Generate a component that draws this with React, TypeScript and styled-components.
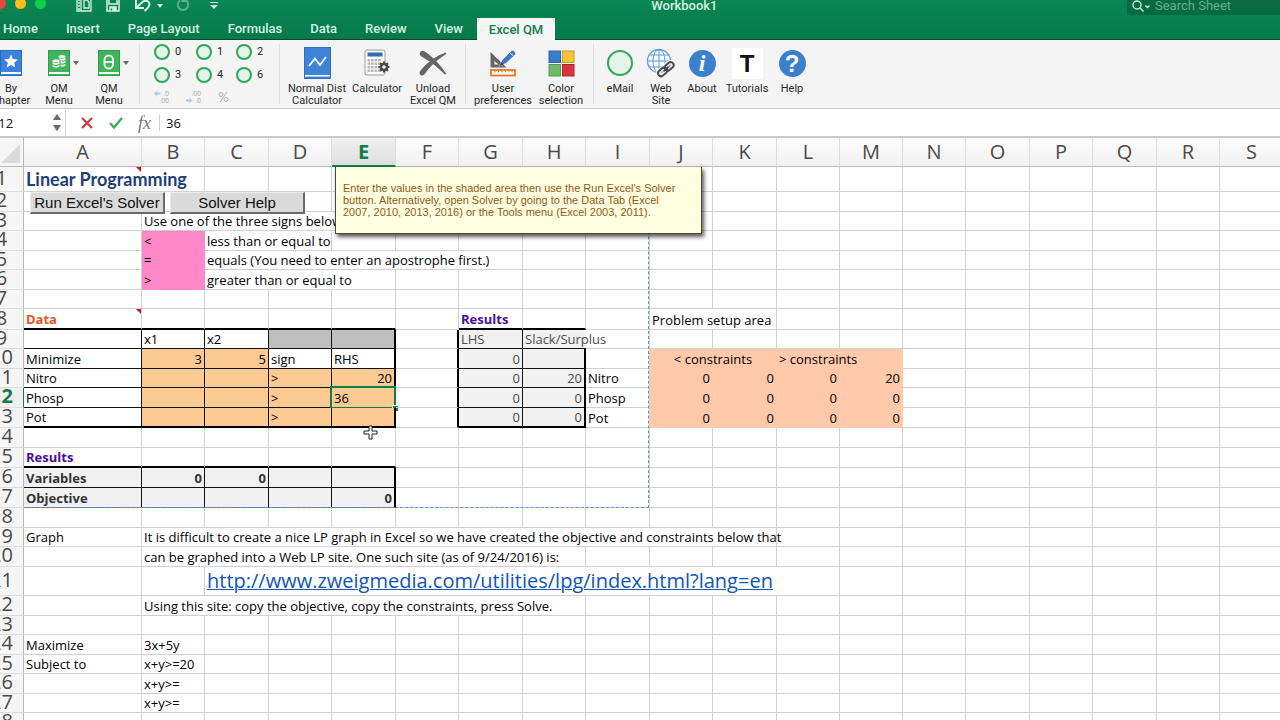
import React from 'react';
import styled, { createGlobalStyle, css } from 'styled-components';

const GlobalStyle = createGlobalStyle`
  *, *::before, *::after { box-sizing: border-box; }
  body { margin: 0; overflow: hidden; background: #fff; }
  button, input { font: inherit; color: inherit; }
`;

const uiFont = `Roboto, Inter, "Liberation Sans", sans-serif`;
const cellFont = `"Open Sans", "Noto Sans", sans-serif`;
const titleFont = `Lato, "Open Sans", sans-serif`;
const grid = '#d0d0d0';
const green = '#107c49';

/* The workbook window hangs slightly over the top left edge of the screen. */
const Viewport = styled.div`
  height: 100vh;
  overflow: hidden;
`;

const WorkbookWindow = styled.div`
  margin: -10px 0 0 -20px;
  display: flex;
  flex-direction: column;
  height: calc(100vh + 10px);
  font-family: ${uiFont};
`;

const Header = styled.header`
  flex: none;
  background: linear-gradient(#0b8a55, #04794a);
  border-bottom: 1px solid #0a4a2c;
  color: #d6f2e3;
`;

const TitleRow = styled.div`
  display: flex;
  align-items: center;
  height: 28px;
  padding-top: 4px;
`;

const TitleLeft = styled.div`
  flex: 7 1 0;
  display: flex;
  align-items: center;
  padding: 0 0 4px 15px;
`;

const Lights = styled.div`
  display: flex;
  gap: 9px;
  margin: 0 30px 2px 0;
`;

const Light = styled.button<{ $color: string }>`
  width: 11px;
  height: 11px;
  padding: 0;
  border: 0;
  border-radius: 50%;
  background: ${(p) => p.$color};
`;

const QuickButton = styled.button<{ $width: number; $dim?: boolean }>`
  display: flex;
  justify-content: center;
  width: ${(p) => p.$width}px;
  padding: 0;
  border: 0;
  background: none;
  opacity: ${(p) => (p.$dim ? 0.4 : 1)};
`;

const Title = styled.h1`
  margin: 0;
  font-size: 13px;
  line-height: 16px;
  font-weight: 500;
`;

const TitleRight = styled.div`
  flex: 6 1 0;
  display: flex;
  justify-content: flex-end;
`;

const SearchBox = styled.label`
  display: flex;
  align-items: center;
  width: 153px;
  height: 18px;
  gap: 3px;
  padding-left: 5px;
  background: #076a41;
`;

const SearchInput = styled.input`
  width: 110px;
  padding: 0;
  border: 0;
  outline: 0;
  background: none;
  font-size: 13px;
  line-height: 16px;
  &::placeholder { color: #66ad8a; opacity: 1; }
`;

const Tabs = styled.nav`
  display: flex;
  height: 21px;
  padding-left: 9px;
`;

const Tab = styled.button<{ $active?: boolean }>`
  padding: 0 14px;
  border: 0;
  background: none;
  font-size: 13px;
  font-weight: 500;
  line-height: 21px;
  ${(p) =>
    p.$active &&
    css`
      padding: 0 12px;
      height: 22px;
      background: #f6f6f6;
      color: #12804c;
    `}
`;

const Ribbon = styled.div`
  flex: none;
  display: flex;
  height: 69px;
  padding-left: 8px;
  background: #f4f4f4;
  border-bottom: 1px solid #c8c8c8;
`;

const Separator = styled.div`
  width: 1px;
  height: 60px;
  margin: 4px 6px 0 5px;
  background: #dedede;
`;

const Tool = styled.button<{ $width: number }>`
  display: flex;
  flex-direction: column;
  align-items: center;
  width: ${(p) => p.$width}px;
  padding: 6px 0 0;
  border: 0;
  background: none;
  color: #262626;
  font-size: 11px;
  line-height: 12px;
  white-space: nowrap;
`;

const IconRow = styled.span`
  display: grid;
  grid-template-columns: 1fr auto 1fr;
  align-items: center;
  width: 100%;
  height: 34px;
  margin-bottom: 3px;
`;

const IconSlot = styled.span`
  grid-column: 2;
  display: flex;
`;

const Arrow = styled.span`
  justify-self: end;
  margin-right: 5px;
  border: 3px solid transparent;
  border-top: 4px solid #666;
  border-bottom: 0;
`;

const Custom = styled.div`
  display: flex;
  flex-direction: column;
  width: 128px;
  padding: 0 0 0 8px;
`;

const CustomGrid = styled.div`
  display: grid;
  grid-template-columns: 42px 40px 42px;
  grid-auto-rows: 23px;
`;

const RingButton = styled.button`
  display: flex;
  align-items: center;
  gap: 5px;
  padding: 0;
  border: 0;
  background: none;
  font-size: 11px;
  color: #262626;
`;

const Ring = styled.span<{ $size: number }>`
  width: ${(p) => p.$size}px;
  height: ${(p) => p.$size}px;
  border: 2px solid #2fa659;
  border-radius: 50%;
  background: #e2f4e6;
`;

const FormatRow = styled.div`
  display: flex;
  gap: 17px;
  padding-top: 4px;
`;

const FormatButton = styled.button`
  display: flex;
  padding: 0;
  border: 0;
  background: none;
`;

const FormulaBar = styled.div`
  flex: none;
  display: flex;
  align-items: center;
  height: 29px;
  background: #fff;
  border-bottom: 2px solid #c9c9c9;
  font-family: ${cellFont};
  color: #111;
`;

const NameBox = styled.input`
  width: 60px;
  padding: 0 0 0 11px;
  border: 0;
  outline: 0;
  background: none;
  font-size: 13px;
`;

const Stepper = styled.div`
  display: flex;
  flex-direction: column;
  gap: 5px;
  margin: 0 4px 0 13px;
`;

const Step = styled.button<{ $up?: boolean }>`
  width: 0;
  height: 0;
  padding: 0;
  border: 0 solid transparent;
  border-width: ${(p) => (p.$up ? '0 4px 6px' : '6px 4px 0')};
  border-${(p) => (p.$up ? 'bottom' : 'top')}-color: #6b6b6b;
`;

const BarLine = styled.div<{ $height: number }>`
  width: 1px;
  height: ${(p) => p.$height}px;
  margin-right: 6px;
  background: #cfcfcf;
`;

const BarButton = styled.button`
  display: flex;
  align-items: center;
  justify-content: center;
  width: 29px;
  padding: 0;
  border: 0;
  background: none;
`;

const Fx = styled.span`
  font: italic 18px/20px "Liberation Serif", serif;
  color: #777;
`;

const FormulaInput = styled.input`
  flex: 1;
  padding: 0;
  border: 0;
  outline: 0;
  background: none;
  font-size: 13px;
`;

const Sheet = styled.main`
  flex: 1;
  position: relative;
  min-height: 0;
  overflow: hidden;
  background: #fff;
`;

const Table = styled.table`
  table-layout: fixed;
  width: 0;
  border-collapse: separate;
  border-spacing: 0;
  font-family: ${cellFont};
  font-size: 13px;
  line-height: 17px;
  color: #000;
`;

const Row = styled.tr<{ $height: number }>`
  height: ${(p) => p.$height}px;
`;

const Corner = styled.th`
  padding: 0;
  background: #f6f6f6;
  border-right: 1px solid #b8b8b8;
  border-bottom: 1px solid #b8b8b8;
  vertical-align: bottom;
  text-align: right;
  line-height: 0;
`;

const ColumnHead = styled.th<{ $active: boolean }>`
  padding: 0;
  background: linear-gradient(#fdfdfd, #f1f1f1);
  border-right: 1px solid #dcdcdc;
  border-bottom: 1px solid #b8b8b8;
  font-size: 20px;
  line-height: 24px;
  font-weight: 400;
  color: #4a4a4a;
  ${(p) =>
    p.$active &&
    css`
      background: linear-gradient(#f0f0f0, #dedede);
      border-bottom: 2px solid ${green};
      font-weight: 700;
      color: ${green};
    `}
`;

const RowHead = styled.th<{ $active: boolean }>`
  padding: 0 0 3px;
  background: ${(p) => (p.$active ? '#efefef' : '#f6f6f6')};
  border-right: 1px solid ${(p) => (p.$active ? green : '#b8b8b8')};
  border-bottom: 1px solid #dcdcdc;
  font-size: 20px;
  line-height: 14px;
  font-weight: ${(p) => (p.$active ? 700 : 400)};
  color: ${(p) => (p.$active ? green : '#4a4a4a')};
`;

const Cell = styled.td<{
  $right: string;
  $bottom: string;
  $line: number;
  $fill?: string;
  $align?: string;
  $bold?: boolean;
  $color?: string;
  $size?: number;
  $font?: string;
  $selected?: boolean;
}>`
  position: relative;
  padding: 0 2px;
  white-space: nowrap;
  vertical-align: bottom;
  border-right: ${(p) => p.$right};
  border-bottom: ${(p) => p.$bottom};
  background: ${(p) => p.$fill ?? 'transparent'};
  text-align: ${(p) => p.$align ?? 'left'};
  font-weight: ${(p) => (p.$bold ? 700 : 400)};
  color: ${(p) => p.$color ?? 'inherit'};
  font-family: ${(p) => p.$font ?? 'inherit'};
  ${(p) =>
    p.$size &&
    css`
      font-size: ${p.$size}px;
      line-height: ${p.$line}px;
    `}
  ${(p) =>
    p.$selected &&
    css`
      &::before {
        content: '';
        position: absolute;
        inset: -2px;
        border: 2px solid ${green};
      }
      &::after {
        content: '';
        position: absolute;
        right: -4px;
        bottom: -4px;
        width: 6px;
        height: 6px;
        background: ${green};
        border: solid #fff;
        border-width: 1px 0 0 1px;
      }
    `}
`;

const NoteMark = styled.span<{ $left: number }>`
  position: absolute;
  top: 0;
  left: ${(p) => p.$left}px;
  border-top: 5px solid #c8161d;
  border-left: 5px solid transparent;
`;

const SiteLink = styled.a`
  color: #1155b5;
  text-decoration: underline;
  text-decoration-thickness: 1px;
`;

const PageBreak = styled.div`
  position: absolute;
  top: 29px;
  left: 44px;
  width: 625px;
  height: 341px;
  border: dashed #5f93c9;
  border-width: 0 1px 1px 0;
  pointer-events: none;
`;

const MacroButtons = styled.div`
  position: absolute;
  top: 54px;
  left: 50px;
  display: flex;
  gap: 5px;
`;

const MacroButton = styled.button`
  width: 135px;
  height: 22px;
  padding: 0;
  border: solid;
  border-width: 1px 2px 2px 1px;
  border-color: #ececec #6a6a6a #6a6a6a #ececec;
  background: #dadada;
  font-family: "Liberation Sans", Arial, sans-serif;
  font-size: 15px;
  line-height: 18px;
  color: #111;
`;

const Comment = styled.aside`
  position: absolute;
  top: 29px;
  left: 355px;
  width: 367px;
  height: 67px;
  padding: 15px 20px 0 7px;
  background: #fdffe0;
  border: solid #4a4a3a;
  border-width: 0 1px 1px;
  box-shadow: 2px 3px 4px rgba(0, 0, 0, 0.65);
  font-family: "Liberation Sans", Arial, sans-serif;
  font-size: 11px;
  line-height: 12px;
  color: #935a17;
`;

const Pointer = styled.svg`
  position: absolute;
  top: 287px;
  left: 383px;
`;

type Spec = {
  text?: React.ReactNode;
  span?: number;
  align?: 'right' | 'center';
  bold?: boolean;
  color?: string;
  size?: number;
  font?: string;
};

const violet = '#4b0d9a';
const num = (text: string, color?: string): Spec => ({ text, align: 'right', color });
const total = (text: string): Spec => ({ text, align: 'right', bold: true, color: '#333' });
const dim = '#4c4c4c';

const cells: Record<string, Spec> = {
  A1: { text: 'Linear Programming', span: 2, bold: true, color: '#1f3f77', size: 18, font: titleFont },
  B3: { text: 'Use one of the three signs below', span: 4 },
  B4: { text: '<' },
  C4: { text: 'less than or equal to', span: 2 },
  B5: { text: '=' },
  C5: { text: 'equals (You need to enter an apostrophe first.)', span: 5 },
  B6: { text: '>' },
  C6: { text: 'greater than or equal to', span: 3 },
  A8: { text: 'Data', bold: true, color: '#e4531f' },
  G8: { text: 'Results', bold: true, color: violet },
  J8: { text: 'Problem setup area', span: 2 },
  B9: { text: 'x1' },
  C9: { text: 'x2' },
  G9: { text: 'LHS', color: dim },
  H9: { text: 'Slack/Surplus', color: dim },
  A10: { text: 'Minimize' },
  B10: num('3'),
  C10: num('5'),
  D10: { text: 'sign' },
  E10: { text: 'RHS' },
  G10: num('0', dim),
  J10: { text: '< constraints', span: 2, align: 'center' },
  L10: { text: '> constraints', span: 2 },
  A11: { text: 'Nitro' },
  D11: { text: '>' },
  E11: num('20'),
  G11: num('0', dim),
  H11: num('20', dim),
  I11: { text: 'Nitro' },
  A12: { text: 'Phosp' },
  D12: { text: '>' },
  E12: { text: '36' },
  G12: num('0', dim),
  H12: num('0', dim),
  I12: { text: 'Phosp' },
  A13: { text: 'Pot' },
  D13: { text: '>' },
  G13: num('0', dim),
  H13: num('0', dim),
  I13: { text: 'Pot' },
  A15: { text: 'Results', bold: true, color: violet },
  A16: { text: 'Variables', bold: true, color: '#333' },
  B16: total('0'),
  C16: total('0'),
  A17: { text: 'Objective', bold: true, color: '#333' },
  E17: total('0'),
  A19: { text: 'Graph' },
  B19: {
    text: 'It is difficult to create a nice LP graph in Excel so we have created the objective and constraints below that',
    span: 10,
  },
  B20: { text: 'can be graphed into a Web LP site. One such site (as of 9/24/2016) is:', span: 7 },
  C21: {
    text: (
      <SiteLink href="http://www.zweigmedia.com/utilities/lpg/index.html?lang=en">
        http://www.zweigmedia.com/utilities/lpg/index.html?lang=en
      </SiteLink>
    ),
    span: 10,
    size: 20,
  },
  B22: { text: 'Using this site: copy the objective, copy the constraints, press Solve.', span: 7 },
  A24: { text: 'Maximize' },
  B24: { text: '3x+5y' },
  A25: { text: 'Subject to' },
  B25: { text: 'x+y>=20' },
  B26: { text: 'x+y>=' },
  B27: { text: 'x+y>=' },
};
['J', 'K', 'L', 'M'].forEach((c) =>
  [11, 12, 13].forEach((r) => {
    cells[c + r] = num(c === 'M' && r === 11 ? '20' : '0');
  })
);

const columns = 'ABCDEFGHIJKLMNOPQRSTUVWXYZ'.split('');
const columnWidth = (index: number) => {
  if (index === 0) return 118;
  return index % 2 || index === 12 ? 63 : 64;
};
const rowHeights = [
  25, 20, 19, 20, 19, 20, 19, 21, 19, 20, 19, 20, 20, 20, 20, 20, 20, 20, 19, 20, 29, 20, 19, 20, 19,
  20, 19, 20, 19, 20,
];

const within = (col: string, row: number, from: string, to: string, top: number, bottom: number) =>
  col >= from && col <= to && row >= top && row <= bottom;

function fillOf(c: string, r: number) {
  if (within(c, r, 'B', 'B', 4, 6)) return '#ff88c8';
  if (within(c, r, 'D', 'E', 9, 9)) return '#bfbfbf';
  if (within(c, r, 'B', 'C', 10, 13) || within(c, r, 'D', 'E', 11, 13)) return '#fdca94';
  if (within(c, r, 'G', 'H', 9, 13) || within(c, r, 'A', 'E', 16, 17)) return '#f1f1f1';
  if (within(c, r, 'J', 'M', 10, 13)) return '#ffc9aa';
  return undefined;
}

function rightOf(c: string, r: number) {
  const thin = '1px solid #111';
  const thick = '2px solid #000';
  if (within(c, r, 'A', 'E', 9, 13) || within(c, r, 'A', 'E', 16, 17)) return c === 'E' ? thick : thin;
  if (within(c, r, 'F', 'F', 9, 13)) return thick;
  if (within(c, r, 'G', 'G', 9, 13)) return thin;
  if (c === 'H' && r === 9) return '0';
  if (within(c, r, 'H', 'H', 10, 13)) return thick;
  if (within(c, r, 'J', 'M', 10, 13) || within(c, r, 'B', 'B', 4, 6)) return `1px solid ${fillOf(c, r)}`;
  return `1px solid ${grid}`;
}

function bottomOf(c: string, r: number) {
  const thick = '2px solid #000';
  const inLeft = c <= 'E';
  const inMiddle = c === 'G' || c === 'H';
  if ((r === 8 || r === 13) && (inLeft || inMiddle)) return thick;
  if (r === 15 && inLeft) return thick;
  if ((r >= 9 && r <= 12 && (inLeft || inMiddle)) || (r === 16 && inLeft)) return '1px solid #111';
  if (r === 17 && inLeft) return '1px solid #777';
  if (within(c, r, 'J', 'M', 10, 13) || within(c, r, 'B', 'B', 4, 6)) return `1px solid ${fillOf(c, r)}`;
  return `1px solid ${grid}`;
}

function SheetRow({ row }: { row: number }) {
  const out: React.ReactNode[] = [];
  for (let i = 0; i < columns.length; ) {
    const c = columns[i];
    const spec = cells[c + row] ?? {};
    const span = spec.span ?? 1;
    out.push(
      <Cell
        key={c}
        colSpan={span}
        $right={rightOf(columns[i + span - 1], row)}
        $bottom={bottomOf(c, row)}
        $line={rowHeights[row - 1] - 1}
        $fill={fillOf(c, row)}
        $align={spec.align}
        $bold={spec.bold}
        $color={spec.color}
        $size={spec.size}
        $font={spec.font}
        $selected={c === 'E' && row === 12}
      >
        {spec.text}
        {c === 'A' && (row === 1 || row === 8) && <NoteMark $left={112} />}
      </Cell>
    );
    i += span;
  }
  return (
    <Row $height={rowHeights[row - 1]}>
      <RowHead scope="row" $active={row === 12}>{row}</RowHead>
      {out}
    </Row>
  );
}

const Book = ({ color, edge, children }: { color: string; edge: string; children: React.ReactNode }) => (
  <svg width="22" height="26" viewBox="0 0 22 26">
    <rect x="0.5" y="0.5" width="21" height="25" fill={color} stroke={edge} />
    <rect x="1" y="22" width="20" height="2" fill="#fff" />
    {children}
  </svg>
);

const ChapterIcon = () => (
  <Book color="#3b82dc" edge="#2a6cc0">
    <path d="M11 4.5l1.9 4.6 5 .4-3.8 3.2 1.2 4.8-4.3-2.6-4.3 2.6 1.2-4.8L4.100 9.500l5-.4z" fill="#fff" />
  </Book>
);

const CoinsIcon = () => (
  <Book color="#3fb45c" edge="#2f9d4c">
    <g fill="#e9f8ec">
      <ellipse cx="8" cy="10.700" rx="3.500" ry="1.500" />
      <path d="M4.500 11.800c1 1.500 6 1.500 7 0v2c-1 1.500-6 1.500-7 0zM4.500 14.800c1 1.500 6 1.500 7 0v1.700c-1 1.500-6 1.500-7 0z" />
      <ellipse cx="14" cy="6.500" rx="3.500" ry="1.500" />
      <path d="M10.500 7.500c1 1.500 6 1.500 7 0v2c-1 1.500-5 1.500-5.500 .5zM12.500 11c1.500.8 4 .5 5-.5v2c-1 1-3 1.300-5 .9zM12.500 14.500c1.500.5 4 .2 5-.8v1.500c-1 1.300-3 1.500-5 1.200z" />
    </g>
  </Book>
);

const ThetaIcon = () => (
  <Book color="#3fb45c" edge="#2f9d4c">
    <rect x="6.500" y="5.500" width="8.500" height="13" rx="4.200" fill="none" stroke="#e9f8ec" strokeWidth="2" />
    <path d="M7 12h8" stroke="#e9f8ec" strokeWidth="2" />
  </Book>
);

const ChartIcon = () => (
  <svg width="27" height="32" viewBox="0 0 27 32">
    <rect x="0.500" y="0.500" width="26" height="31" fill="#3d83d6" stroke="#2f6fbd" />
    <rect x="1" y="28" width="25" height="1.500" fill="#fff" />
    <path d="M5 19l6-7.500 5 6.500 6-8" fill="none" stroke="#fff" strokeWidth="1.800" />
  </svg>
);

const CalculatorIcon = () => (
  <svg width="28" height="28" viewBox="0 0 28 28">
    <rect x="2" y="1" width="20" height="25" rx="2" fill="#fcfcfc" stroke="#9c9c9c" />
    <rect x="4.500" y="3.500" width="15" height="4" fill="#2f6db3" />
    {[10, 13.5, 17, 20.5].map((y) =>
      [4.5, 8, 11.5, 15].map((x) => <rect key={`${x}-${y}`} x={x} y={y} width="2.600" height="2.400" fill="#b4b4b4" />)
    )}
    <g stroke="#4a4a4a">
      <path d="M21 12.500v11M15.500 18h11M17.100 14.100l7.800 7.800M24.900 14.100l-7.800 7.800" strokeWidth="2.200" />
      <circle cx="21" cy="18" r="3" fill="#f4f4f4" strokeWidth="2.400" />
    </g>
  </svg>
);

const UnloadIcon = () => (
  <svg width="28" height="28" viewBox="0 0 28 28" fill="#666">
    <path d="M.8 4.200C1.500 1.600 4 1.300 6 2.600c8 5.600 15 12.600 21.200 22.200l-1.200.9C19 18.500 11.500 12.500 2.500 7.500.9 6.600.5 5.400.8 4.200z" />
    <path d="M26.800 3.600l.5 1.300C19 10 11 17 6 24.800c-1.200 1.900-3.200 2.300-4.600 1.200-1.300-1-1-2.800 0-4.200C8 13.500 17 7 26.800 3.600z" />
  </svg>
);

const PreferencesIcon = () => (
  <svg width="28" height="28" viewBox="0 0 28 28">
    <path d="M1.500 3v15.500h16z M5.500 12v3.500h4z" fill="#666" fillRule="evenodd" />
    <path d="M10.500 17l2.500-6L22.500 1.500c1.500-1.200 5 2 4 4L17 14.500z" fill="#3f79bf" stroke="#f4f4f4" strokeWidth="0.800" />
    <path d="M10.500 17l1.500-4 3 2.500z" fill="#444" />
    <path d="M20.500 3.500L24.500 7" stroke="#f4f4f4" />
    <rect x="2" y="21" width="24" height="5.500" fill="#fff" stroke="#e6762c" strokeWidth="1.800" />
    <path d="M6 21v2.500M9.500 21v2.500M13 21v2.500M16.500 21v2.500M20 21v2.500M23 21v2.500" stroke="#e6762c" />
  </svg>
);

const ColorIcon = () => (
  <svg width="27" height="27" viewBox="0 0 27 27">
    <rect x="1" y="1" width="11.500" height="11.500" fill="#3c7dcb" stroke="#2b65ab" />
    <rect x="14.500" y="1" width="11.500" height="11.500" fill="#f2c43c" stroke="#c99b23" />
    <rect x="1" y="14.500" width="11.500" height="11.500" fill="#74b96b" stroke="#57994f" />
    <rect x="14.500" y="14.500" width="11.500" height="11.500" fill="#dd3340" stroke="#b02430" />
  </svg>
);

const WebIcon = () => (
  <svg width="30" height="30" viewBox="0 0 30 30" fill="none">
    <circle cx="13" cy="13" r="11.500" fill="#f3f8fd" stroke="#5f9cda" strokeWidth="1.300" />
    <path d="M13 1.500v23M1.500 13h23M3.500 7h19M3.500 19h19" stroke="#5f9cda" />
    <ellipse cx="13" cy="13" rx="6" ry="11.500" stroke="#5f9cda" />
    <g transform="rotate(-40 20 21)" stroke="#f4f4f4" strokeWidth="4.500">
      <rect x="10.500" y="18" width="10" height="6" rx="3" />
      <rect x="19" y="18" width="10" height="6" rx="3" />
    </g>
    <g transform="rotate(-40 20 21)" stroke="#4a4a4a" strokeWidth="2">
      <rect x="10.500" y="18" width="10" height="6" rx="3" />
      <rect x="19" y="18" width="10" height="6" rx="3" />
      <path d="M17 21h6" />
    </g>
  </svg>
);

const Disc = styled.span`
  display: flex;
  align-items: center;
  justify-content: center;
  width: 27px;
  height: 27px;
  border-radius: 50%;
  color: #fff;
  background: #3b7fcf;
  font: 700 24px/27px "Liberation Sans", sans-serif;
`;

const InfoDisc = styled(Disc)`
  font: italic 700 24px/27px "Liberation Serif", serif;
`;

const TileT = styled.span`
  width: 31px;
  height: 31px;
  background: #fff;
  color: #111;
  font: 700 24px/31px "Liberation Sans", sans-serif;
  text-align: center;
`;

const SheetsIcon = () => (
  <svg width="16" height="16" viewBox="0 0 16 16" fill="none" stroke="#d6f2e3" strokeWidth="1.300">
    <path d="M1 1h14v14H1zM5 1v14" />
    <path d="M9 4h2l2 2v6H8V4zM2 4h2M2 7h2M2 10h2M2 13h2" />
  </svg>
);

const SaveIcon = () => (
  <svg width="14" height="16" viewBox="0 0 14 16" fill="none" stroke="#d6f2e3" strokeWidth="1.500">
    <path d="M1 1h12v14H1z" />
    <path d="M3 1h8v7H3z" fill="#0a7f4d" />
    <path d="M4 15v-4h6v4" fill="#d6f2e3" />
    <path d="M5.500 12.500v2" stroke="#0a7f4d" />
  </svg>
);

const UndoIcon = () => (
  <svg width="17" height="16" viewBox="0 0 17 16" fill="none" stroke="#d6f2e3" strokeWidth="2">
    <path d="M2 4v8h8M2.500 11.500L9 5.500c3-2 6.500 0 6.500 3S13 12.500 10.500 15" />
  </svg>
);

const RedoIcon = () => (
  <svg width="14" height="16" viewBox="0 0 14 16" fill="none" stroke="#d6f2e3" strokeWidth="2">
    <path d="M4 4.500a5.200 5.200 0 1 0 6 0M10.500 0v5h-5" />
  </svg>
);

const Caret = () => (
  <svg width="6" height="16" viewBox="0 0 6 16"><path d="M0 8h6l-3 4z" fill="#d6f2e3" /></svg>
);

const MoreIcon = () => (
  <svg width="10" height="16" viewBox="0 0 10 16">
    <path d="M1 9h8l-4 4z M1 6h8v1H1z" fill="#d6f2e3" />
  </svg>
);

const Decimals = ({ top, bottom, arrowUp }: { top: string; bottom: string; arrowUp?: boolean }) => (
  <svg width="15" height="14" viewBox="0 0 15 14" fontFamily="Roboto, sans-serif" fontSize="7" fill="#b0b0b0">
    <text x="15" y="6" textAnchor="end">{top}</text>
    <text x="15" y="13" textAnchor="end">{bottom}</text>
    <path d={arrowUp ? 'M0 3.500l3-3v2h3.500v2H3v2z' : 'M6.500 10.500l-3-3v2H0v2h3.500v2z'} fill="#a9cdec" />
  </svg>
);

type ToolProps = { width: number; icon: React.ReactNode; lines: string[]; menu?: boolean };
const RibbonTool = ({ width, icon, lines, menu }: ToolProps) => (
  <Tool $width={width}>
    <IconRow>
      <IconSlot>{icon}</IconSlot>
      {menu && <Arrow />}
    </IconRow>
    {lines.map((line) => (
      <span key={line}>{line}</span>
    ))}
  </Tool>
);

export default function App() {
  return (
    <Viewport>
      <GlobalStyle />
      <WorkbookWindow>
        <Header>
          <TitleRow>
            <TitleLeft>
              <Lights>
                <Light $color="#f0453c" aria-label="Close" />
                <Light $color="#fdbc1c" aria-label="Minimize" />
                <Light $color="#0fce48" aria-label="Zoom" />
              </Lights>
              <QuickButton $width={16} aria-label="New from template"><SheetsIcon /></QuickButton>
              <QuickButton $width={42} aria-label="Save"><SaveIcon /></QuickButton>
              <QuickButton $width={17} aria-label="Undo"><UndoIcon /></QuickButton>
              <QuickButton $width={18} aria-label="Undo history"><Caret /></QuickButton>
              <QuickButton $width={28} $dim aria-label="Redo"><RedoIcon /></QuickButton>
              <QuickButton $width={34} aria-label="Customize toolbar"><MoreIcon /></QuickButton>
            </TitleLeft>
            <Title>Workbook1</Title>
            <TitleRight>
              <SearchBox>
                <svg width="20" height="14" viewBox="0 0 20 14" fill="none" stroke="#c5ead6" strokeWidth="1.500">
                  <circle cx="5" cy="6" r="4" />
                  <path d="M8 9l3.500 3.500M13.500 6.500l2 2 2-2" />
                </svg>
                <SearchInput placeholder="Search Sheet" aria-label="Search Sheet" />
              </SearchBox>
            </TitleRight>
          </TitleRow>
          <Tabs>
            {['Home', 'Insert', 'Page Layout', 'Formulas', 'Data', 'Review', 'View'].map((t) => (
              <Tab key={t}>{t}</Tab>
            ))}
            <Tab $active>Excel QM</Tab>
          </Tabs>
        </Header>

        <Ribbon>
          <RibbonTool width={46} icon={<ChapterIcon />} lines={['By', 'Chapter']} />
          <RibbonTool width={50} icon={<CoinsIcon />} lines={['OM', 'Menu']} menu />
          <RibbonTool width={50} icon={<ThetaIcon />} lines={['QM', 'Menu']} menu />
          <Separator />
          <Custom>
            <CustomGrid>
              {['0', '1', '2', '3', '4', '6'].map((n) => (
                <RingButton key={n}>
                  <Ring $size={16} />
                  {n}
                </RingButton>
              ))}
            </CustomGrid>
            <FormatRow>
              <FormatButton aria-label="Increase decimal"><Decimals top=".0" bottom=".00" arrowUp /></FormatButton>
              <FormatButton aria-label="Decrease decimal"><Decimals top=".00" bottom=".0" /></FormatButton>
              <FormatButton aria-label="Percent">
                <svg width="11" height="14" viewBox="0 0 11 14" fill="none" stroke="#b0b0b0">
                  <circle cx="3" cy="4.500" r="2" />
                  <circle cx="8" cy="9.500" r="2" />
                  <path d="M9 2L2 12" />
                </svg>
              </FormatButton>
            </FormatRow>
          </Custom>
          <Separator />
          <RibbonTool width={62} icon={<ChartIcon />} lines={['Normal Dist', 'Calculator']} />
          <RibbonTool width={58} icon={<CalculatorIcon />} lines={['Calculator']} />
          <RibbonTool width={54} icon={<UnloadIcon />} lines={['Unload', 'Excel QM']} />
          <Separator />
          <RibbonTool width={62} icon={<PreferencesIcon />} lines={['User', 'preferences']} />
          <RibbonTool width={54} icon={<ColorIcon />} lines={['Color', 'selection']} />
          <Separator />
          <RibbonTool width={40} icon={<Ring $size={26} />} lines={['eMail']} />
          <RibbonTool width={42} icon={<WebIcon />} lines={['Web', 'Site']} />
          <RibbonTool width={40} icon={<InfoDisc>i</InfoDisc>} lines={['About']} />
          <RibbonTool width={50} icon={<TileT>T</TileT>} lines={['Tutorials']} />
          <RibbonTool width={40} icon={<Disc>?</Disc>} lines={['Help']} />
        </Ribbon>

        <FormulaBar>
          <NameBox defaultValue="E12" aria-label="Name box" />
          <Stepper>
            <Step $up aria-label="Previous" />
            <Step aria-label="Next" />
          </Stepper>
          <BarLine $height={26} />
          <BarButton aria-label="Cancel">
            <svg width="12" height="12" viewBox="0 0 12 12" stroke="#d33a40" strokeWidth="2.200">
              <path d="M1 1l10 10M11 1L1 11" />
            </svg>
          </BarButton>
          <BarButton aria-label="Enter">
            <svg width="14" height="12" viewBox="0 0 14 12" fill="none" stroke="#3fae5a" strokeWidth="2.400">
              <path d="M1 6l4 4.500L13 1" />
            </svg>
          </BarButton>
          <BarButton aria-label="Insert function"><Fx>fx</Fx></BarButton>
          <BarLine $height={16} />
          <FormulaInput defaultValue="36" aria-label="Formula" />
        </FormulaBar>

        <Sheet>
          <Table>
            <colgroup>
              <col style={{ width: 44 }} />
              {columns.map((c, i) => (
                <col key={c} style={{ width: columnWidth(i) }} />
              ))}
            </colgroup>
            <thead>
              <Row $height={29}>
                <Corner>
                  <svg width="24" height="26" viewBox="0 0 24 26"><path d="M21 4v19H2z" fill="#d9d9d9" /></svg>
                </Corner>
                {columns.map((c) => (
                  <ColumnHead key={c} scope="col" $active={c === 'E'}>{c}</ColumnHead>
                ))}
              </Row>
            </thead>
            <tbody>
              {rowHeights.map((_, i) => (
                <SheetRow key={i} row={i + 1} />
              ))}
            </tbody>
          </Table>
          <PageBreak />
          <MacroButtons>
            <MacroButton>Run Excel's Solver</MacroButton>
            <MacroButton>Solver Help</MacroButton>
          </MacroButtons>
          <Comment>
            Enter the values in the shaded area then use the Run Excel's Solver button. Alternatively, open Solver by
            going to the Data Tab (Excel 2007, 2010, 2013, 2016) or the Tools menu (Excel 2003, 2011).
          </Comment>
          <Pointer width="15" height="15" viewBox="0 0 15 15">
            <path d="M6 1h3v5h5v3H9v5H6V9H1V6h5z" fill="#fff" stroke="#222" />
          </Pointer>
        </Sheet>
      </WorkbookWindow>
    </Viewport>
  );
}
